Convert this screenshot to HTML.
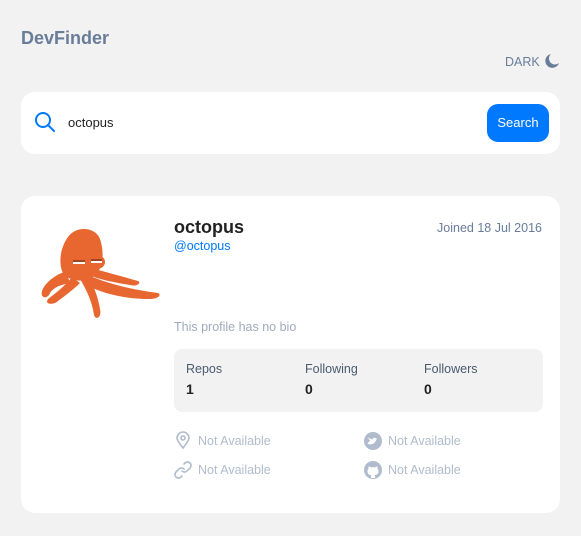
<!DOCTYPE html>
<html><head><style>
*{margin:0;padding:0;box-sizing:border-box}
body{width:581px;height:536px;background:#f2f2f2;font-family:"Liberation Sans","DejaVu Sans",sans-serif;position:relative;overflow:hidden}
.a{position:absolute;white-space:nowrap}
.card{position:absolute;background:#fff;border-radius:14px}
.na{color:#b0bccd;font-size:12.5px}
</style></head><body>
<div class="a" style="left:21px;top:28px;font-size:18px;font-weight:bold;color:#697c9a">DevFinder</div>
<div class="a" style="left:505px;top:55px;font-size:12.5px;color:#697c9a">DARK</div>
<svg class="a" style="left:544px;top:53px" width="16" height="16" viewBox="0 0 16 16"><path d="M7 1A7 7 0 1 0 15 10 6 6 0 0 1 7 1Z" fill="#697c9a"/></svg>
<div class="card" style="left:21px;top:92px;width:539px;height:62px"></div>
<svg class="a" style="left:34px;top:111px" width="22" height="22" viewBox="0 0 22 22"><circle cx="9" cy="9" r="7" fill="none" stroke="#0079ff" stroke-width="2"/><path d="M14 14l6 6" stroke="#0079ff" stroke-width="2" stroke-linecap="round"/></svg>
<div class="a" style="left:68px;top:115px;font-size:13px;color:#222">octopus</div>
<div class="a" style="left:487px;top:104px;width:62px;height:38px;background:#0079ff;border-radius:11px;color:#fff;font-size:13px;line-height:38px;text-align:center">Search</div>
<div class="card" style="left:21px;top:196px;width:539px;height:317px"></div>
<svg class="a" style="left:38px;top:225px" width="124" height="98" viewBox="0 0 124 98">
<g fill="#e8662f">
<path d="M30 12C38 0 58 2 62 14C66 26 66 40 58 50C48 58 30 58 24 46C20 34 24 20 30 12Z"/>
<path d="M28 46C18 50 8 56 4 66C2 74 10 74 12 68C16 62 22 60 32 58Z"/>
<path d="M34 52C28 60 18 68 10 74C6 80 16 80 20 76C28 70 36 64 42 58Z"/>
<path d="M42 54C48 64 54 76 56 90C58 96 64 92 62 84C60 72 56 62 52 54Z"/>
<path d="M50 50C68 58 90 64 120 68C124 70 120 74 112 74C90 74 68 70 48 60Z"/>
<path d="M56 44C72 48 86 52 100 56C104 58 98 62 92 60C80 58 68 56 56 52Z"/>
<ellipse cx="42" cy="38" rx="9" ry="7"/><ellipse cx="59" cy="37" rx="8" ry="7"/>
</g>
<path d="M35 38h12M53 37h11" stroke="#fff" stroke-width="2"/><path d="M35 36h12M53 35h11" stroke="#8a3a1a" stroke-width="1.5"/>
</svg>
<div class="a" style="left:174px;top:217px;font-size:18px;font-weight:bold;color:#222">octopus</div>
<div class="a" style="left:174px;top:239px;font-size:12.5px;color:#0079ff">@octopus</div>
<div class="a" style="right:39px;top:221px;font-size:12.5px;color:#697c9a">Joined 18 Jul 2016</div>
<div class="a" style="left:174px;top:320px;font-size:12.5px;color:#a0aabd">This profile has no bio</div>
<div class="a" style="left:174px;top:349px;width:369px;height:63px;background:#f2f2f2;border-radius:8px"></div>
<div class="a" style="left:186px;top:362px;font-size:12.5px;color:#4b5a70">Repos</div>
<div class="a" style="left:305px;top:362px;font-size:12.5px;color:#4b5a70">Following</div>
<div class="a" style="left:424px;top:362px;font-size:12.5px;color:#4b5a70">Followers</div>
<div class="a" style="left:186px;top:381px;font-size:14px;font-weight:bold;color:#222">1</div>
<div class="a" style="left:305px;top:381px;font-size:14px;font-weight:bold;color:#222">0</div>
<div class="a" style="left:424px;top:381px;font-size:14px;font-weight:bold;color:#222">0</div>
<svg class="a" style="left:175px;top:431px" width="16" height="18" viewBox="0 0 16 18"><path d="M8 17C4 12 2 9 2 7A6 6 0 0 1 14 7C14 9 12 12 8 17Z" fill="none" stroke="#b0bccd" stroke-width="1.6"/><circle cx="8" cy="7" r="2" fill="none" stroke="#b0bccd" stroke-width="1.6"/></svg>
<div class="a na" style="left:198px;top:434px">Not Available</div>
<svg class="a" style="left:174px;top:461px" width="18" height="18" viewBox="0 0 18 18"><path d="M8 10a3.5 3.5 0 0 0 5 0l3-3a3.5 3.5 0 0 0-5-5l-1 1M10 8a3.5 3.5 0 0 0-5 0l-3 3a3.5 3.5 0 0 0 5 5l1-1" fill="none" stroke="#b0bccd" stroke-width="1.6" stroke-linecap="round"/></svg>
<div class="a na" style="left:198px;top:463px">Not Available</div>
<svg class="a" style="left:364px;top:432px" width="18" height="18" viewBox="0 0 18 18"><circle cx="9" cy="9" r="9" fill="#b0bccd"/><path d="M4 12c3 1 7 0 8-4l1.5-1.5-1.5.3c-.5-1.5-3-1.5-3.5.5-2 0-3-1-4-2 0 2 1 3 2 3.5-1 0-1.5 1-3 3z" fill="#fff"/></svg>
<div class="a na" style="left:388px;top:434px">Not Available</div>
<svg class="a" style="left:364px;top:461px" width="18" height="18" viewBox="0 0 18 18"><circle cx="9" cy="9" r="9" fill="#b0bccd"/><path d="M7 17v-3c-2 0-3.5-1-3.5-4 0-1 .3-1.5 1-2.3-.2-.5-.2-1.5.2-2.2 1 0 1.7.5 2.3 1a6 6 0 0 1 4 0c.6-.5 1.3-1 2.3-1 .4.7.4 1.7.2 2.2.7.8 1 1.3 1 2.3 0 3-1.5 4-3.5 4v3z" fill="#fff"/></svg>
<div class="a na" style="left:388px;top:463px">Not Available</div>
</body></html>
